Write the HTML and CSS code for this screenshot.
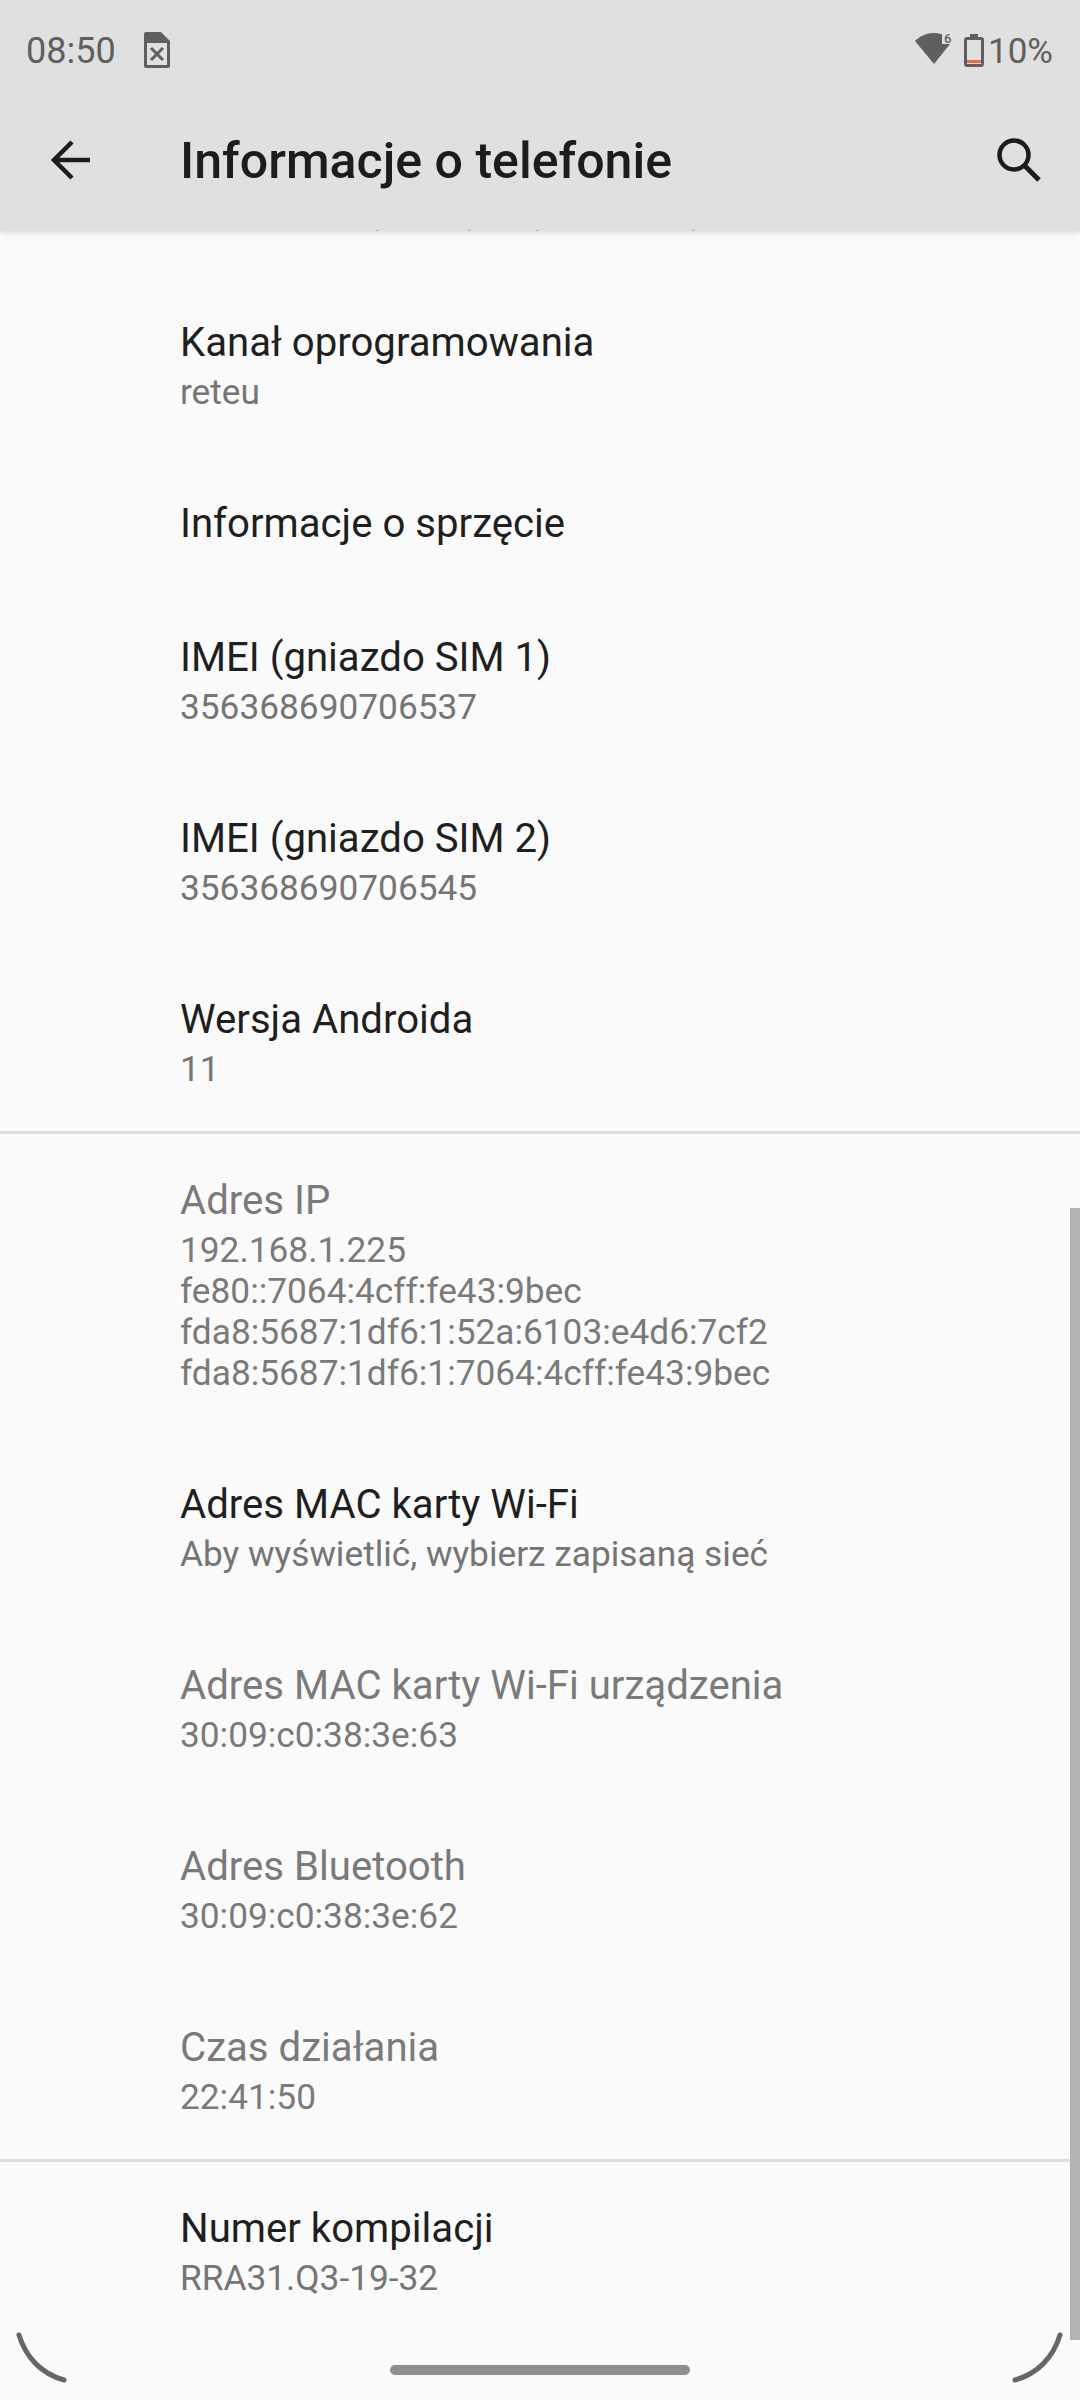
FILE: index.html
```html
<!DOCTYPE html>
<html lang="pl">
<head>
    <meta charset="utf-8">
    <title>Informacje o telefonie</title>
    <link rel="stylesheet" href="styles.css">
</head>
<body>
    <div id="phone">
        <header class="appbar">
            <div class="statusbar">
                <span class="clock">08:50</span>
                <svg class="sim-icon" width="26" height="36" viewBox="0 0 26 36">
                    <path fill="#5f5f5f" fill-rule="evenodd" d="M2 0h15l9 9v25a2 2 0 0 1-2 2H2a2 2 0 0 1-2-2V2a2 2 0 0 1 2-2zM3 11v22h20V11z"/>
                    <path stroke="#5f5f5f" stroke-width="3" d="M7 16l12 12M19 16L7 28"/>
                </svg>
                <span class="status-right">
                    <svg class="wifi-icon" width="38" height="36" viewBox="0 -4 38 36">
                        <path fill="#5f5f5f" d="M0 8C5 3 12 0 18 0c3 0 6 .4 9 1.200V11h8L19 31z"/>
                        <text class="wifi-six" x="29" y="10">6</text>
                    </svg>
                    <svg class="battery-icon" width="20" height="33" viewBox="0 0 20 33">
                        <path fill="#5f5f5f" fill-rule="evenodd" d="M6 0h8v3h3a3 3 0 0 1 3 3v24a3 3 0 0 1-3 3H3a3 3 0 0 1-3-3V6a3 3 0 0 1 3-3h3zM3 6v24h14V6z"/>
                        <rect x="3" y="26" width="14" height="3" fill="#f4693c"/>
                    </svg>
                    <span class="battery-text">10%</span>
                </span>
            </div>
            <div class="toolbar">
                <svg class="back-icon" width="40" height="40" viewBox="0 0 40 40">
                    <path fill="none" stroke="#1c1c1c" stroke-width="4.500" d="M40 20H4M22 2L4 20l18 18"/>
                </svg>
                <h1 class="page-title">Informacje o telefonie</h1>
                <svg class="search-icon" width="44" height="44" viewBox="0 0 44 44">
                    <circle cx="17" cy="17" r="14.500" fill="none" stroke="#1c1c1c" stroke-width="4.500"/>
                    <path stroke="#1c1c1c" stroke-width="5" d="M27 27l15 15"/>
                </svg>
            </div>
            <!-- descenders of the row scrolled away under the bar -->
            <span class="speck speck-a"></span>
            <span class="speck speck-b"></span>
            <span class="speck speck-c"></span>
            <span class="speck speck-d"></span>
        </header>

        <main class="list">
            <div class="row">
                <div class="row-title">Kanał oprogramowania</div>
                <div class="row-sub">reteu</div>
            </div>
            <div class="row">
                <div class="row-title">Informacje o sprzęcie</div>
            </div>
            <div class="row">
                <div class="row-title">IMEI (gniazdo SIM 1)</div>
                <div class="row-sub">356368690706537</div>
            </div>
            <div class="row">
                <div class="row-title">IMEI (gniazdo SIM 2)</div>
                <div class="row-sub">356368690706545</div>
            </div>
            <div class="row">
                <div class="row-title">Wersja Androida</div>
                <div class="row-sub">11</div>
            </div>
            <div class="divider"></div>
            <div class="row disabled">
                <div class="row-title">Adres IP</div>
                <div class="row-sub">192.168.1.225<br>fe80::7064:4cff:fe43:9bec<br>fda8:5687:1df6:1:52a:6103:e4d6:7cf2<br>fda8:5687:1df6:1:7064:4cff:fe43:9bec</div>
            </div>
            <div class="row">
                <div class="row-title">Adres MAC karty Wi-Fi</div>
                <div class="row-sub">Aby wyświetlić, wybierz zapisaną sieć</div>
            </div>
            <div class="row disabled">
                <div class="row-title">Adres MAC karty Wi-Fi urządzenia</div>
                <div class="row-sub">30:09:c0:38:3e:63</div>
            </div>
            <div class="row disabled">
                <div class="row-title">Adres Bluetooth</div>
                <div class="row-sub">30:09:c0:38:3e:62</div>
            </div>
            <div class="row disabled">
                <div class="row-title">Czas działania</div>
                <div class="row-sub">22:41:50</div>
            </div>
            <div class="divider"></div>
            <div class="row">
                <div class="row-title">Numer kompilacji</div>
                <div class="row-sub">RRA31.Q3-19-32</div>
            </div>
        </main>

        <div class="scrollbar"></div>
        <div class="home-pill"></div>
        <svg class="corner corner-left" width="56" height="56" viewBox="0 0 56 56">
            <path fill="none" stroke="#666" stroke-width="5" stroke-linecap="round" d="M3 3C10 26 26 42 48 48"/>
        </svg>
        <svg class="corner corner-right" width="56" height="56" viewBox="0 0 56 56">
            <path fill="none" stroke="#666" stroke-width="5" stroke-linecap="round" d="M53 3C46 26 30 42 8 48"/>
        </svg>
    </div>
</body>
</html>
```

FILE: styles.css
```css
* {
    box-sizing: border-box;
}
body {
    margin: 0;
    padding: 0;
    font-family: Roboto, "Noto Sans", sans-serif;
    background-color: #fafafa;
}
#phone {
    position: relative;
    width: 1080px;
    height: 2400px;
    overflow: hidden;
    background-color: #fafafa;
}
.appbar {
    position: relative;
    height: 231px;
    background-color: #e0e0e0;
    box-shadow: 0 2px 6px rgba(0, 0, 0, 0.12);
}
.statusbar {
    height: 100px;
    padding: 0 27px 0 26px;
    display: flex;
    align-items: center;
    color: #5f5f5f;
}
.clock {
    margin-top: 2px;
    font-size: 36px;
}
.sim-icon {
    margin-left: 28px;
}
.status-right {
    margin-left: auto;
    display: flex;
    align-items: center;
}
.wifi-icon {
    margin-top: -6px;
    margin-right: 11px;
    overflow: visible;
}
.wifi-six {
    font-size: 13px;
    font-weight: 500;
    fill: #5f5f5f;
}
.battery-text {
    margin-top: 2px;
    margin-left: 4px;
    font-size: 35px;
}
.toolbar {
    height: 120px;
    padding: 0 39px 0 50px;
    display: flex;
    align-items: center;
}
.page-title {
    margin: 2px 0 0 90px;
    font-size: 50.100px;
    font-weight: 500;
    color: #1c1c1c;
}
.search-icon {
    margin-left: auto;
}
.speck {
    position: absolute;
    top: 230px;
    width: 3px;
    height: 1px;
    background-color: #b5b5b5;
}
.speck-a {
    left: 376px;
}
.speck-b {
    left: 468px;
}
.speck-c {
    left: 536px;
}
.speck-d {
    left: 692px;
}
.list {
    padding-top: 45px;
}
.row {
    padding: 44px 40px 45px 180px;
}
.row-title {
    font-size: 40.150px;
    line-height: 45px;
    color: #1f1f1f;
}
.row-sub {
    margin-top: 7px;
    margin-bottom: -1px;
    font-size: 35.250px;
    line-height: 41px;
    color: #757575;
}
.disabled .row-title {
    color: #7a7a7a;
}
.disabled .row-sub {
    color: #7a7a7a;
}
.divider {
    height: 3px;
    margin-top: -3px;
    background-color: #dedee0;
}
.scrollbar {
    position: absolute;
    top: 1208px;
    right: 0;
    width: 10px;
    height: 1132px;
    background-color: #b3b3b3;
}
.home-pill {
    position: absolute;
    left: 390px;
    top: 2365px;
    width: 300px;
    height: 10px;
    border-radius: 5px;
    background-color: #8f8f8f;
}
.corner {
    position: absolute;
    top: 2332px;
}
.corner-left {
    left: 16px;
}
.corner-right {
    right: 17px;
}
```
